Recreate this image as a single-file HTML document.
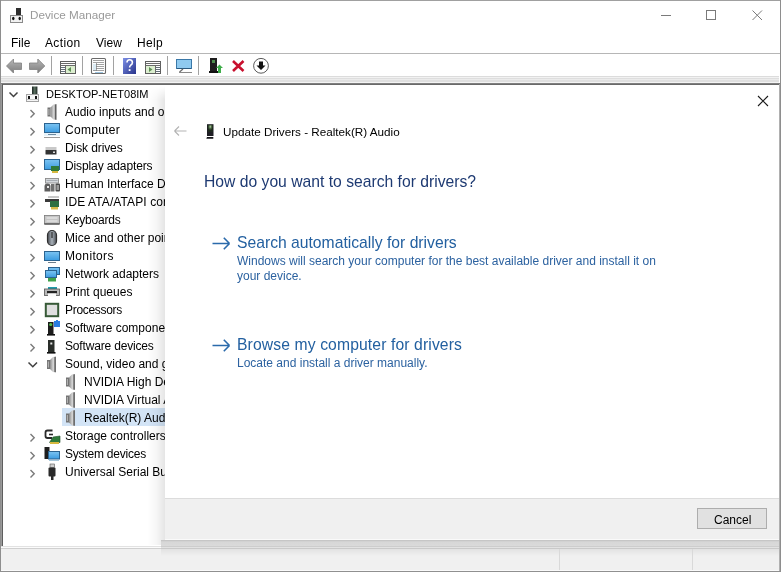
<!DOCTYPE html>
<html><head><meta charset="utf-8">
<style>
*{margin:0;padding:0;box-sizing:border-box}
html,body{width:781px;height:572px;overflow:hidden;background:#fff}
.t{will-change:transform}
body{position:relative;font-family:"Liberation Sans",sans-serif;font-size:12px;color:#000}
.a{position:absolute}
.t{position:absolute;white-space:nowrap;line-height:18px;height:18px}
svg{position:absolute;overflow:visible}
</style></head><body>
<!-- window border -->
<div class="a" style="left:0;top:0;width:781px;height:1px;background:#a0a0a0"></div>
<div class="a" style="left:0;top:0;width:1px;height:572px;background:#8e8e8e"></div>

<div class="a" style="left:0;top:571px;width:781px;height:1px;background:#909090"></div>

<!-- title -->
<div class="t" style="left:30px;top:6px;color:#999;font-size:11.7px">Device Manager</div>

<!-- menu -->
<div class="t" style="left:11px;top:34px">File</div>
<div class="t" style="left:45px;top:34px;letter-spacing:0.35px">Action</div>
<div class="t" style="left:96px;top:34px">View</div>
<div class="t" style="left:137px;top:34px;letter-spacing:0.35px">Help</div>
<div class="a" style="left:1px;top:53px;width:779px;height:1px;background:#b6b6b6"></div>

<!-- toolbar bottom -->
<div class="a" style="left:1px;top:76px;width:778px;height:7px;background:linear-gradient(#dcdcdc 0 14.28%,#f2f2f2 14.28% 28.57%,#dedede 28.57% 42.86%,#ebebeb 42.86% 57.14%,#e0e0e0 57.14% 85.71%,#f4f4f4 85.71%)"></div>
<div class="a" style="left:1px;top:83px;width:779px;height:2px;background:linear-gradient(#8a8a8a,#5e5e5e)"></div>

<!-- tree left border -->
<div class="a" style="left:1px;top:84px;width:1px;height:462px;background:#9a9a9a"></div>
<div class="a" style="left:2px;top:84px;width:1px;height:462px;background:#5e5e5e"></div>

<!-- status bar -->
<div class="a" style="left:1px;top:546px;width:779px;height:1px;background:#e2e2e2"></div>
<div class="a" style="left:1px;top:547px;width:779px;height:1px;background:#fbfbfb"></div>
<div class="a" style="left:1px;top:548px;width:779px;height:1px;background:#d0d0d0"></div>
<div class="a" style="left:1px;top:549px;width:779px;height:21px;background:#f0f0f0"></div>
<div class="a" style="left:1px;top:570px;width:779px;height:1px;background:#fafafa"></div>

<!-- TREE -->
<div id="tree">
<div class="t" style="left:46px;top:85px;font-size:11px">DESKTOP-NET08IM</div>
<div class="t" style="left:65px;top:103px">Audio inputs and outputs</div>
<div class="t" style="left:65px;top:121px;letter-spacing:0.3px">Computer</div>
<div class="t" style="left:65px;top:139px;letter-spacing:-0.1px">Disk drives</div>
<div class="t" style="left:65px;top:157px;letter-spacing:-0.12px">Display adapters</div>
<div class="t" style="left:65px;top:175px">Human Interface Devices</div>
<div class="t" style="left:65px;top:193px;letter-spacing:0.1px">IDE ATA/ATAPI controllers</div>
<div class="t" style="left:65px;top:211px;letter-spacing:-0.2px">Keyboards</div>
<div class="t" style="left:65px;top:229px">Mice and other pointing devices</div>
<div class="t" style="left:65px;top:247px;letter-spacing:0.35px">Monitors</div>
<div class="t" style="left:65px;top:265px">Network adapters</div>
<div class="t" style="left:65px;top:283px">Print queues</div>
<div class="t" style="left:65px;top:301px;letter-spacing:-0.3px">Processors</div>
<div class="t" style="left:65px;top:319px">Software components</div>
<div class="t" style="left:65px;top:337px;letter-spacing:-0.17px">Software devices</div>
<div class="t" style="left:65px;top:355px">Sound, video and game controllers</div>
<div class="a" style="left:62px;top:408px;width:120px;height:18px;background:#d3e4f6"></div>
<div class="t" style="left:84px;top:373px">NVIDIA High Definition Audio</div>
<div class="t" style="left:84px;top:391px">NVIDIA Virtual Audio Device</div>
<div class="t" style="left:84px;top:409px">Realtek(R) Audio</div>
<div class="t" style="left:65px;top:427px">Storage controllers</div>
<div class="t" style="left:65px;top:445px;letter-spacing:-0.22px">System devices</div>
<div class="t" style="left:65px;top:463px">Universal Serial Bus controllers</div>
</div>


<svg width="781" height="572" style="left:0;top:0" viewBox="0 0 781 572">
<defs>
<linearGradient id="spk" x1="0" x2="1" y1="0" y2="0"><stop offset="0" stop-color="#8a8a8a"/><stop offset="0.55" stop-color="#d8d8d8"/><stop offset="1" stop-color="#8a8a8a"/></linearGradient>
<linearGradient id="scr" x1="0" x2="0" y1="0" y2="1"><stop offset="0" stop-color="#7cc4f2"/><stop offset="1" stop-color="#3b9be0"/></linearGradient>
<linearGradient id="hlp" x1="0" x2="1" y1="0" y2="1"><stop offset="0" stop-color="#7d8fe6"/><stop offset="1" stop-color="#27338a"/></linearGradient>
<linearGradient id="arr" x1="0" x2="0" y1="0" y2="1"><stop offset="0" stop-color="#b8b8b8"/><stop offset="0.5" stop-color="#9a9a9a"/><stop offset="1" stop-color="#7d7d7d"/></linearGradient>
<g id="speaker"><rect x="0.5" y="3.5" width="3" height="9" fill="#747474"/><rect x="1.3" y="5" width="1.2" height="6" fill="#b0b0b0"/><path d="M3.5,3.5 L6.5,0.5 L9.5,0 L9.5,16 L6.5,15.5 L3.5,12.5 Z" fill="url(#spk)"/><path d="M8.6,0.5 L8.6,15.5" stroke="#606060" stroke-width="1.3"/></g>
<g id="chev"><path d="M0.5,0.5 L4.2,4.2 L0.5,7.9" fill="none" stroke="#7a7a7a" stroke-width="1.4"/></g>
</defs>
<!-- title icon -->
<rect x="16" y="8" width="5" height="7" fill="#2e2e2e"/>
<rect x="10.5" y="15.5" width="12" height="7" fill="#f2f2f2" stroke="#8a8a8a"/>
<ellipse cx="13.3" cy="18.5" rx="1.2" ry="1.8" fill="#111"/>
<ellipse cx="19.7" cy="18.5" rx="1.2" ry="1.8" fill="#111"/>
<!-- window controls -->
<path d="M661,15.5 H671" stroke="#7a7a7a" stroke-width="1"/>
<rect x="706.5" y="10.5" width="9" height="9" fill="none" stroke="#7a7a7a"/>
<path d="M752.5,10.5 L762,20 M762,10.5 L752.5,20" stroke="#7a7a7a" stroke-width="1"/>

<!-- toolbar -->
<path d="M6.5,66 L13.5,59 L13.5,63 L21.5,63 L21.5,69.5 L13.5,69.5 L13.5,73 Z" fill="url(#arr)" stroke="#808080" stroke-width="0.8"/>
<path d="M44.8,66 L37.8,59 L37.8,63 L29.5,63 L29.5,69.5 L37.8,69.5 L37.8,73 Z" fill="url(#arr)" stroke="#808080" stroke-width="0.8"/>
<rect x="51" y="56" width="1" height="19" fill="#a2a2a2"/>
<rect x="82" y="56" width="1" height="19" fill="#a2a2a2"/>
<rect x="113" y="56" width="1" height="19" fill="#a2a2a2"/>
<rect x="167" y="56" width="1" height="19" fill="#a2a2a2"/>
<rect x="198" y="56" width="1" height="19" fill="#a2a2a2"/>
<!-- icon1 -->
<rect x="60.5" y="61.5" width="15" height="12" fill="#fff" stroke="#5e5e5e"/>
<rect x="66" y="66" width="9" height="7" fill="#dcefd0"/>
<path d="M60.5,63.5 H75.5 M60.5,65.5 H75.5 M65.5,65.5 V73" stroke="#6a6a6a"/>
<path d="M61,67.5 H65 M61,69.5 H65 M61,71.5 H65" stroke="#64707a"/>
<path d="M71,67 L67.5,69.5 L71,72 Z" fill="#5d8f55"/>
<!-- icon2 -->
<rect x="91.5" y="58.5" width="14" height="15" rx="1" fill="#fff" stroke="#6a6a6a" stroke-width="1.1"/>
<rect x="93" y="64" width="3" height="7" fill="#dcecf4"/>
<path d="M93,60.5 H104 M96.5,63 V71 M93,62.5 H104 M96,64.5 H104 M96,66.5 H104 M96,68.5 H104 M93,70.5 H104" stroke="#7a7a7a" stroke-width="0.7"/>
<path d="M95,72.5 H103" stroke="#9cc4e0" stroke-width="1"/>
<!-- help -->
<rect x="123" y="58" width="13" height="16" fill="url(#hlp)"/>
<path d="M127,62.5 Q127,59.8 129.6,59.8 Q132.4,59.8 132.4,62.5 Q132.4,64.2 130.6,65.3 Q129.6,66 129.6,67.5" fill="none" stroke="#fff" stroke-width="1.6"/><rect x="128.7" y="69.2" width="1.8" height="1.8" fill="#fff"/>
<!-- icon4 -->
<rect x="145.5" y="61.5" width="15" height="12" fill="#fff" stroke="#5e5e5e"/>
<rect x="146" y="66" width="9" height="7" fill="#dcefd0"/>
<path d="M145.5,63.5 H160.5 M145.5,65.5 H160.5 M155.5,65.5 V73" stroke="#6a6a6a"/>
<path d="M156,67.5 H160 M156,69.5 H160 M156,71.5 H160" stroke="#64707a"/>
<path d="M149,67 L152.5,69.5 L149,72 Z" fill="#5d8f55"/>
<!-- monitor tb -->
<rect x="176.5" y="59.5" width="15" height="9" fill="#8fcaf0" stroke="#3a78a8"/>
<path d="M177,68.5 H191" stroke="#2a5a80"/>
<path d="M179.5,72 L183,69" stroke="#6b6b6b" stroke-width="1.2"/>
<path d="M179,72.5 H192" stroke="#8a8a8a" stroke-width="1"/>
<!-- update driver -->
<rect x="210" y="58" width="7" height="13" fill="#1e1e1e"/>
<rect x="212" y="60" width="3" height="3" fill="#4d8f4d"/>
<rect x="209" y="71" width="9" height="2" fill="#111"/>
<path d="M219.5,64.5 L223,68 L221,68 L221,73 L218,73 L218,68 L216,68 Z" fill="#3fae4a"/>
<!-- red x -->
<path d="M233,61 L243.5,71 M243.5,61 L233,71" stroke="#c8102e" stroke-width="2.6"/>
<!-- circle down -->
<circle cx="261" cy="65.8" r="7.4" fill="#fff" stroke="#5a5a5a" stroke-width="1"/>
<path d="M259,61.5 H263 V65.5 H265.5 L261,70 L256.5,65.5 H259 Z" fill="#111"/>

<!-- TREE -->
<path d="M9.5,92.5 L13.5,96.5 L17.5,92.5" fill="none" stroke="#404040" stroke-width="1.5"/>
<linearGradient id="twr" x1="0" x2="1" y1="0" y2="0"><stop offset="0" stop-color="#1a2420"/><stop offset="0.5" stop-color="#5a7060"/><stop offset="1" stop-color="#1a2420"/></linearGradient>
<rect x="32" y="86.5" width="5.4" height="7.5" fill="url(#twr)"/>
<rect x="26.5" y="94.5" width="12" height="7" fill="#f6f6f6" stroke="#a4a4a4"/>
<path d="M27,99.5 H38" stroke="#c8c8c8"/>
<rect x="28" y="96" width="2" height="3" fill="#151515"/>
<rect x="35" y="96" width="2" height="3" fill="#151515"/>

<use href="#chev" x="30" y="109.5"/>
<use href="#speaker" x="47" y="104"/>
<use href="#chev" x="30" y="127.5"/>
<rect x="44.5" y="123.5" width="15" height="9" fill="url(#scr)" stroke="#2b6390"/>
<rect x="44" y="133" width="16" height="3" fill="#e6f3fb"/>
<path d="M48,134.5 H56" stroke="#6e8aa0" stroke-width="1"/>
<path d="M44,137.5 H60" stroke="#9a9a9a" stroke-width="1"/>
<use href="#chev" x="30" y="145.5"/>
<rect x="45.5" y="147" width="11" height="3" fill="#c9c9c9"/>
<rect x="45.5" y="150" width="11" height="4.5" rx="0.5" fill="#333"/>
<rect x="53" y="151.5" width="2" height="1.5" fill="#ddd"/>
<use href="#chev" x="30" y="163.5"/>
<rect x="44.5" y="159.5" width="15" height="10" fill="url(#scr)" stroke="#2b6390"/>
<rect x="51" y="166" width="8" height="5" fill="#2f7a3a"/>
<rect x="52" y="171" width="6" height="2" fill="#d7b940"/>
<use href="#chev" x="30" y="181.5"/>
<rect x="45.5" y="178.5" width="13" height="4.5" fill="#d4d8dc" stroke="#8c8c8c" stroke-width="0.9"/>
<path d="M46.5,180.5 H57.5" stroke="#9aa0a6" stroke-width="0.8"/>
<path d="M44.5,191.5 V186.5 Q44.5,183.5 47.5,183.5 Q50.5,183.5 50.5,186.5 V191.5 Z" fill="#5e5e5e"/>
<rect x="47" y="186" width="2" height="2" fill="#e8e8e8"/>
<rect x="51" y="184" width="3.5" height="7.5" fill="#707070"/>
<rect x="55.5" y="183.5" width="4.5" height="8" rx="1" fill="#4a4a4a"/>
<rect x="56.5" y="185" width="2.5" height="5" fill="#9a9a9a"/>
<use href="#chev" x="30" y="199.5"/>
<rect x="48" y="196" width="11" height="2" fill="#c8c8c8"/>
<rect x="45" y="199" width="14" height="3" fill="#3a3a3a"/>
<rect x="50" y="201" width="9" height="6" fill="#2d7042"/>
<rect x="51" y="207" width="7" height="2.5" fill="#d6bb4a"/>
<use href="#chev" x="30" y="217.5"/>
<rect x="44.5" y="215.5" width="15" height="8.5" fill="#c5c5c5" stroke="#7a7a7a" stroke-width="0.8"/>
<path d="M46.5,218 H57.5 M46.5,221 H57.5" stroke="#f0f0f0" stroke-width="1.2"/>
<path d="M44.5,224 H59.5" stroke="#333" stroke-width="1"/>
<use href="#chev" x="30" y="235.5"/>
<defs><linearGradient id="mse" x1="0" x2="1"><stop offset="0" stop-color="#4a4e54"/><stop offset="0.5" stop-color="#a8b0b8"/><stop offset="1" stop-color="#4a4e54"/></linearGradient></defs><rect x="47.5" y="230.5" width="9" height="15" rx="4.5" fill="url(#mse)" stroke="#2e2e2e" stroke-width="1.2"/>
<path d="M52,232 V238" stroke="#2a2a2a" stroke-width="1.2"/>
<use href="#chev" x="30" y="253.5"/>
<rect x="44.5" y="251.5" width="15" height="9" fill="url(#scr)" stroke="#2b6390"/>
<path d="M48,262.5 H56" stroke="#6e7e8a" stroke-width="1"/>
<use href="#chev" x="30" y="271.5"/>
<rect x="48.5" y="267.5" width="11" height="7" fill="url(#scr)" stroke="#2b6390"/>
<rect x="45.5" y="270.5" width="11" height="7" fill="url(#scr)" stroke="#2b6390"/>
<rect x="48" y="278" width="8" height="3.5" fill="#3fa24a"/>
<use href="#chev" x="30" y="289.5"/>
<rect x="48" y="287" width="9" height="3" fill="#1f9aaa"/>
<rect x="44.5" y="289" width="15" height="6.5" fill="#b8b8b8" stroke="#555" stroke-width="0.8"/>
<rect x="47" y="291" width="10" height="2.2" fill="#222"/>
<rect x="48" y="293.5" width="8" height="3" fill="#fafafa"/>
<use href="#chev" x="30" y="307.5"/>
<rect x="45.8" y="303.8" width="12.4" height="12.4" fill="#e0e0e0" stroke="#375a37" stroke-width="2"/>
<use href="#chev" x="30" y="325.5"/>
<rect x="48" y="322" width="5.5" height="12.5" fill="#1c1c1c"/>
<circle cx="50.7" cy="324.5" r="1.6" fill="#52c04a"/>
<rect x="47" y="334" width="8" height="1.6" fill="#111"/>
<path d="M54,321 H56 V320 H58 V321 H60 V327 H54 Z" fill="#2a7de0"/>
<use href="#chev" x="30" y="343.5"/>
<rect x="48" y="340" width="6.5" height="12.5" fill="#2a2e2a"/>
<rect x="50.3" y="342.5" width="2" height="2" fill="#e8e8e8"/>
<rect x="47" y="352" width="8.5" height="1.6" fill="#111"/>
<path d="M28.5,362.5 L32.8,366.8 L37,362.5" fill="none" stroke="#404040" stroke-width="1.5"/>
<use href="#speaker" x="46.5" y="356.5"/>
<use href="#speaker" x="65.5" y="374"/>
<use href="#speaker" x="65.5" y="392"/>
<use href="#speaker" x="65.5" y="410"/>
<use href="#chev" x="30" y="433.5"/>
<path d="M52.5,430.5 H47.5 Q45.5,430.5 45.5,432.5 V436 Q45.5,438 47.5,438 H52" fill="none" stroke="#2a2a2a" stroke-width="1.8"/>
<path d="M49,434.5 H53" stroke="#2a2a2a" stroke-width="1.6"/>
<path d="M49.5,442.5 L53,437 L60,436 L60,442.5 Z" fill="#2f7a3a" stroke="#1f4f2a" stroke-width="0.6"/>
<rect x="50" y="442" width="9" height="2" fill="#d7b940"/>
<use href="#chev" x="30" y="451.5"/>
<rect x="44.5" y="447" width="5" height="12" fill="#1e1e1e"/>
<rect x="48.5" y="451.5" width="11" height="7.5" fill="url(#scr)" stroke="#2b6390"/>
<path d="M49,460.5 H59" stroke="#a8c8dc"/>
<use href="#chev" x="30" y="469.5"/>
<rect x="50" y="464" width="4.5" height="3.5" fill="#cfcfcf" stroke="#555" stroke-width="0.6"/>
<rect x="48.5" y="467.5" width="7" height="9" rx="1" fill="#2a2a2a"/>
<rect x="51" y="476" width="2.5" height="4" fill="#2a2a2a"/>
</svg>

<!-- DIALOG -->
<div class="a" style="left:147px;top:86px;width:18px;height:459px;background:linear-gradient(90deg,rgba(0,0,0,0),rgba(0,0,0,0.03) 50%,rgba(0,0,0,0.1));-webkit-mask-image:linear-gradient(transparent,#000 14px);mask-image:linear-gradient(transparent,#000 14px)"></div>
<div class="a" style="left:165px;top:85px;width:615px;height:455px;background:#fff"></div>
<div class="a" style="left:165px;top:498px;width:615px;height:41px;background:#f0f0f0;border-top:1px solid #dcdcdc"></div>
<div class="a" style="left:165px;top:539px;width:615px;height:1px;background:#fafafa"></div>
<div class="a" style="left:161px;top:540px;width:619px;height:9px;background:linear-gradient(#c6c6c6 0,#c6c6c6 11.1%,#d2d2d2 11.1%,#d2d2d2 22.2%,#d7d7d7 22.2%,#dadada 66.6%,#cdcdcd 66.6%,#cdcdcd 77.7%,#e2e2e2 77.7%,#e2e2e2 88.8%,#c9c9c9 88.8%)"></div>
<div class="a" style="left:161px;top:549px;width:618px;height:7px;background:linear-gradient(#e2e2e2,#f0f0f0)"></div>

<svg width="781" height="572" style="left:0;top:0" viewBox="0 0 781 572">
<path d="M758,96 L768,106 M768,96 L758,106" stroke="#1a1a1a" stroke-width="1.1"/>
<path d="M174.5,131 H186.5 M174.5,131 L179,126.5 M174.5,131 L179,135.5" fill="none" stroke="#b4b4b4" stroke-width="1.1"/>
<defs><radialGradient id="drvg" cx="0.5" cy="0.25" r="0.5"><stop offset="0" stop-color="#b8c8b0"/><stop offset="0.5" stop-color="#4a6a40"/><stop offset="1" stop-color="#1e2a1e"/></radialGradient></defs>
<rect x="207" y="124.2" width="6.5" height="11.8" fill="#1e1e24"/>
<rect x="207.8" y="125" width="5" height="7" fill="url(#drvg)"/>
<path d="M206.3,138.8 L207,136.9 H213.3 V138.8 Z" fill="#141418"/>
<path d="M212.5,243.5 H229.5 M229.5,243.5 L223.8,237.8 M229.5,243.5 L223.8,249.2" fill="none" stroke="#2a6aab" stroke-width="1.6"/>
<path d="M212.5,345.5 H229.5 M229.5,345.5 L223.8,339.8 M229.5,345.5 L223.8,351.2" fill="none" stroke="#2a6aab" stroke-width="1.6"/>
</svg>
<div class="t" style="left:223px;top:123px;font-size:11.7px">Update Drivers - Realtek(R) Audio</div>
<div class="t" style="left:204px;top:171px;font-size:15.7px;line-height:22px;height:22px;color:#1e3a72">How do you want to search for drivers?</div>
<div class="t" style="left:237px;top:232px;font-size:15.7px;line-height:22px;height:22px;color:#2360a0">Search automatically for drivers</div>
<div class="t" style="left:237px;top:253px;color:#2c62a0;line-height:16px">Windows will search your computer for the best available driver and install it on</div>
<div class="t" style="left:237px;top:268px;color:#2c62a0;line-height:16px">your device.</div>
<div class="t" style="left:237px;top:334px;font-size:15.7px;line-height:22px;height:22px;color:#2360a0;letter-spacing:0.12px">Browse my computer for drivers</div>
<div class="t" style="left:237px;top:355px;color:#2c62a0;line-height:16px">Locate and install a driver manually.</div>

<div class="a" style="left:697px;top:508px;width:70px;height:21px;background:#e1e1e1;border:1px solid #adadad"></div>
<div class="t" style="left:714px;top:511px">Cancel</div>
<div class="a" style="left:779px;top:84px;width:1px;height:487px;background:#b0b0b0"></div>
<div class="a" style="left:780px;top:0;width:1px;height:572px;background:#8e8e8e"></div>
<div class="a" style="left:559px;top:549px;width:1px;height:21px;background:#d9d9d9"></div>
<div class="a" style="left:692px;top:549px;width:1px;height:21px;background:#d9d9d9"></div>
</body></html>
